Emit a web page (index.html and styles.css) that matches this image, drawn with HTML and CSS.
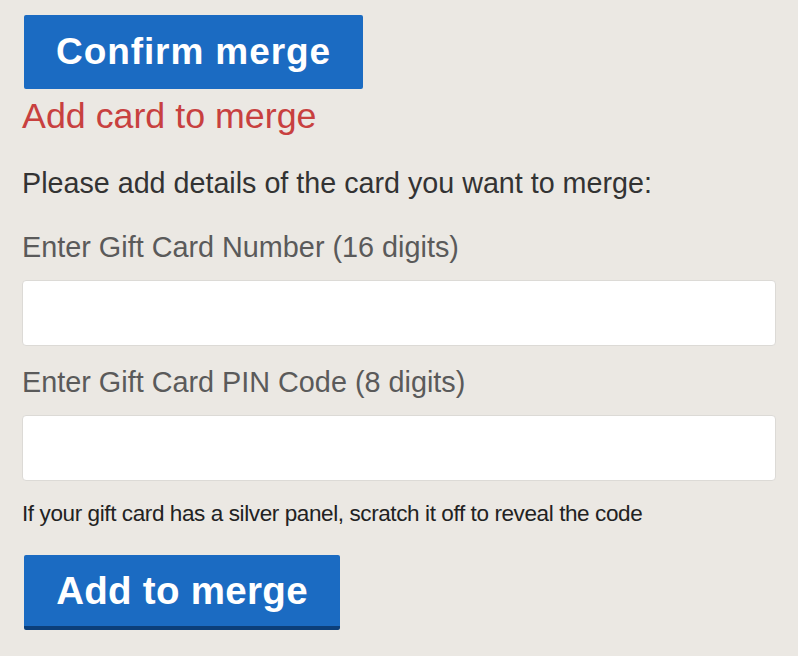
FILE: index.html
```html
<!DOCTYPE html>
<html>
<head>
<meta charset="utf-8">
<link rel="stylesheet" href="styles.css">
</head>
<body>
<div class="page">
  <button class="btn btn-confirm" type="button">Confirm merge</button>
  <h2 class="title">Add card to merge</h2>
  <p class="intro">Please add details of the card you want to merge:</p>
  <label class="label" for="num">Enter Gift Card Number (16 digits)</label>
  <input class="field" id="num" type="text">
  <label class="label label-pin" for="pin">Enter Gift Card PIN Code (8 digits)</label>
  <input class="field" id="pin" type="text">
  <p class="hint">If your gift card has a silver panel, scratch it off to reveal the code</p>
  <button class="btn btn-add" type="button">Add to merge</button>
</div>
</body>
</html>
```
FILE: styles.css
```css
html, body {
  margin: 0;
  padding: 0;
  background: #ebe8e3;
}
.page {
  display: flex;
  flex-direction: column;
  align-items: flex-start;
  padding: 15px 22px 0 22px;
  font-family: "Liberation Sans", Arial, sans-serif;
  color: #333;
}
.btn {
  margin-left: 2px;
  border: none;
  border-radius: 2px;
  background: #1b6bc2;
  color: #fff;
  font-family: "Liberation Sans", Arial, sans-serif;
  font-weight: bold;
  cursor: pointer;
}
.btn-confirm {
  height: 74px;
  width: 339px;
  font-size: 37px;
  letter-spacing: 0.9px;
  padding: 0;
}
.title {
  margin: 7px 0 0 0;
  font-weight: normal;
  font-size: 35.8px;
  line-height: 40px;
  color: #c8403f;
}
.intro {
  margin: 31px 0 0 0;
  font-size: 28.7px;
  line-height: 32px;
  color: #333;
}
.label {
  margin-top: 32px;
  font-size: 28.8px;
  line-height: 32px;
  color: #5a5a5a;
}
.label-pin {
  margin-top: 20px;
}
.field {
  box-sizing: border-box;
  margin-top: 17px;
  width: 754px;
  height: 66px;
  border: 1px solid #dcdad6;
  border-radius: 4px;
  background: #fff;
}
.hint {
  margin: 22px 0 0 0;
  font-size: 22.5px;
  letter-spacing: -0.4px;
  line-height: 22px;
  color: #222;
}
.btn-add {
  margin-top: 30px;
  height: 75px;
  width: 316px;
  font-size: 38.5px;
  letter-spacing: 0.3px;
  padding: 0;
  border-bottom: 4px solid #0c3f7a;
}
```
